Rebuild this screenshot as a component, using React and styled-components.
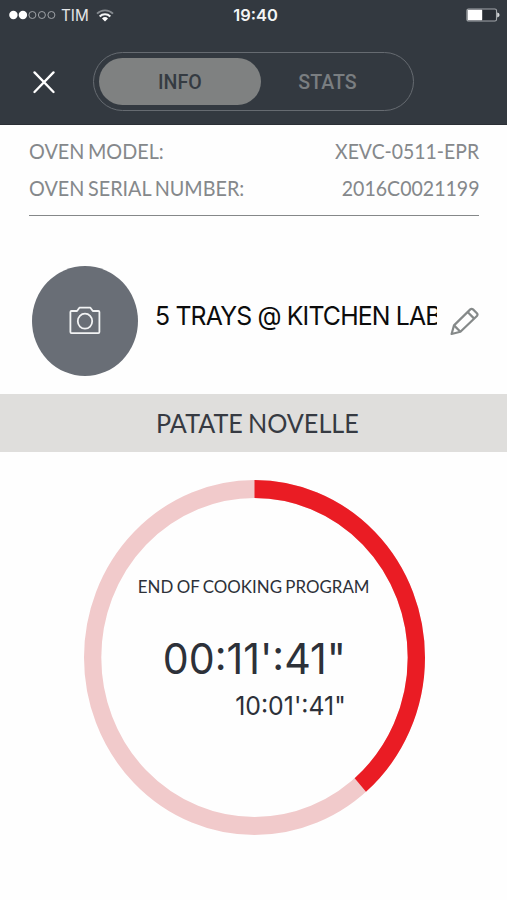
import React from 'react';
import styled, { createGlobalStyle } from 'styled-components';

const GlobalStyle = createGlobalStyle`
  * { box-sizing: border-box; }
  body { margin: 0; background-color: #fefefe; }
`

const Screen = styled.div`
  width: 507px;
  height: 900px;
  overflow: hidden;
  background-color: #fefefe;
  font-family: Lato, sans-serif;
`

// every label uses slightly condensed letters
const Label = styled.span`
  display: inline-block;
  white-space: nowrap;
  transform: scaleX(${props => props.$condense || 0.955});
  transform-origin: ${props => props.$from || 'left'} center;
`

const Header = styled.header`
  height: 125px;
  background-color: #333940;
  border-bottom: 1px solid #2b2f35;
`

const StatusBar = styled.div`
  display: grid;
  grid-template-columns: 1fr auto 1fr;
  align-items: center;
  height: 30px;
  padding: 0 7px 0 9px;
  font-family: Inter, sans-serif;
  font-size: 16px;
  line-height: 30px;
  color: #e4e6e8;
`

const Carrier = styled.div`
  display: flex;
  align-items: center;
`

const CarrierName = styled(Label)`
  width: 35px;
  margin-left: 5px;
`

const Clock = styled(Label)`
  font-weight: 600;
  color: #f4f5f6;
  margin-left: 2px;
`

const Battery = styled.svg`
  justify-self: end;
`

const Nav = styled.nav`
  display: flex;
  align-items: center;
  gap: 38px;
  padding: 22px 0 0 33px;
`

const Switch = styled.div`
  display: flex;
  width: 321px;
  height: 59px;
  padding: 5px;
  border: 1px solid #666b71;
  border-radius: 30px;
`

const Tab = styled.button`
  width: ${props => props.$active ? 162 : 133}px;
  height: 47px;
  padding: 0;
  border: none;
  border-radius: 24px;
  background-color: ${props => props.$active ? '#7f8181' : 'transparent'};
  color: ${props => props.$active ? '#353b42' : '#7a7e81'};
  font-family: Roboto, sans-serif;
  font-size: 20.5px;
  font-weight: 500;
  line-height: 48px;
`

const Info = styled.section`
  margin: 0 28px 0 29px;
  padding: 8px 0;
  border-bottom: 1px solid #858889;
`

const InfoRow = styled.div`
  display: flex;
  justify-content: space-between;
  height: 37px;
  font-size: 20.5px;
  line-height: 37px;
  word-spacing: -1.5px;
  color: #85888b;
`

const Device = styled.section`
  display: flex;
  align-items: center;
  height: 178px;
  padding: 32px 28px 0 32px;
`

const Photo = styled.div`
  display: flex;
  align-items: center;
  justify-content: center;
  width: 106px;
  height: 110px;
  border-radius: 50%;
  background-color: #696e76;
`

const DeviceName = styled.div`
  width: 282px;
  height: 36px;
  margin: 0 13px 10px 17px;
  overflow: hidden;
  font-family: Inter, sans-serif;
  font-size: 26px;
  line-height: 36px;
  letter-spacing: -0.88px;
  color: #0c0c0c;
`

const Program = styled.h2`
  height: 58px;
  margin: 0;
  padding-left: 155.5px;
  background-color: #dfdedc;
  font-size: 26.5px;
  font-weight: 400;
  line-height: 58px;
  word-spacing: -1.5px;
  color: #363a42;
`

const Dial = styled.section`
  display: grid;
  justify-content: center;
  padding: 27.5px 0 0 1px;
`

const Ring = styled.svg`
  grid-area: 1 / 1;
`

const Times = styled.div`
  grid-area: 1 / 1;
  display: flex;
  flex-direction: column;
  align-items: center;
  padding-top: 93.5px;
  color: #2d3139;
`

const Caption = styled(Label)`
  font-size: 17.6px;
  line-height: 28px;
  word-spacing: -1px;
`

const Remaining = styled(Label)`
  align-self: flex-end;
  margin: 31px 79px 0 0;
  font-family: Inter, sans-serif;
  font-size: 42px;
  line-height: 54px;
`

const Total = styled(Label)`
  align-self: flex-end;
  margin: 4px 79px 0 0;
  font-family: Inter, sans-serif;
  font-size: 26px;
  line-height: 32px;
`

const info = [
  { label: 'OVEN MODEL:', value: 'XEVC-0511-EPR', condense: 0.947 },
  { label: 'OVEN SERIAL NUMBER:', value: '2016C0021199', condense: 0.953 },
]

const SIGNAL = 2
const PROGRESS = 0.3864

const SignalDots = () => (
  <svg width="47" height="10" viewBox="0 0 47 10">
    {[0, 1, 2, 3, 4].map((i) => (
      <circle
        key={i}
        cx={4.4 + i * 9.5}
        cy="5"
        r={i < SIGNAL ? 4.2 : 3.5}
        fill={i < SIGNAL ? '#fff' : 'none'}
        stroke={i < SIGNAL ? 'none' : '#a9adb1'}
        strokeWidth="0.9"
      />
    ))}
  </svg>
)

const WifiIcon = () => (
  <svg width="18" height="13" viewBox="0 0 18 13" fill="none">
    <path d="M1 4.6 A11.5 11.5 0 0 1 17 4.6" stroke="#858a8f" strokeWidth="1.9" />
    <path d="M3.7 7.4 A7.6 7.6 0 0 1 14.3 7.4" stroke="#f4f5f6" strokeWidth="2.1" />
    <path d="M6 9.5 A4.4 4.4 0 0 1 12 9.5 L9 12.4 Z" fill="#fff" />
  </svg>
)

const BatteryIcon = () => (
  <Battery width="34" height="14" viewBox="0 0 34 14">
    <rect x="0.9" y="1" width="29.6" height="12" rx="1.6" fill="#282d34" stroke="#a4a8ac" strokeWidth="1.1" />
    <rect x="1.6" y="1.8" width="14.6" height="10.4" rx="0.6" fill="#fff" />
    <path d="M31.2 4.6 Q33.6 5 33.6 7 Q33.6 9 31.2 9.4 Z" fill="#d5d7d9" />
  </Battery>
)

const CloseIcon = () => (
  <svg width="22" height="24" viewBox="0 0 22 24" stroke="#fff" strokeWidth="2.3" strokeLinecap="round">
    <path d="M1.5 2.4 L20.5 22 M20.5 2.4 L1.5 22" />
  </svg>
)

const CameraIcon = () => (
  <svg width="32" height="30" viewBox="0 0 32 30" fill="none" stroke="#f2f3f4" strokeWidth="1.8" strokeLinejoin="round">
    <path d="M2.5 5 H8 L10.4 1.7 H21.4 L23.8 5 H29.3 Q30.4 5 30.4 6.1 V26 Q30.4 27.1 29.3 27.1 H2.5 Q1.4 27.1 1.4 26 V6.1 Q1.4 5 2.5 5 Z" />
    <ellipse cx="16" cy="15.2" rx="7.2" ry="7.5" />
  </svg>
)

const PencilIcon = () => (
  <svg width="29" height="29" viewBox="0 0 29 29" fill="none" stroke="#858989" strokeWidth="2.2" strokeLinejoin="round">
    <path d="M1.6 27 L4 18.4 L20.3 2.4 Q21.6 1.2 23 2.4 L26.9 6.2 Q28.1 7.6 26.9 9 L10.4 24.8 Z" />
    <path d="M4 18.4 L10.4 24.8 M17.6 5 L24.2 11.6" />
  </svg>
)

const ProgressRing = ({ value }) => {
  const r = 168.5
  const length = 2 * Math.PI * r
  return (
    <Ring width="341" height="355" viewBox="0 0 355 355" preserveAspectRatio="none" fill="none" strokeWidth="18">
      <circle cx="177.5" cy="177.5" r={r} stroke="#f1cacb" />
      <circle
        cx="177.5"
        cy="177.5"
        r={r}
        stroke="#ea1c24"
        strokeDasharray={`${length * value} ${length}`}
        transform="rotate(-90 177.5 177.5)"
      />
    </Ring>
  )
}

export default function App() {
  return (
    <Screen>
      <GlobalStyle />
      <Header>
        <StatusBar>
          <Carrier>
            <SignalDots />
            <CarrierName>TIM</CarrierName>
            <WifiIcon />
          </Carrier>
          <Clock $condense={1.03} $from="center">19:40</Clock>
          <BatteryIcon />
        </StatusBar>
        <Nav>
          <CloseIcon />
          <Switch>
            <Tab $active><Label $from="center">INFO</Label></Tab>
            <Tab><Label $from="center">STATS</Label></Tab>
          </Switch>
        </Nav>
      </Header>
      <Info>
        {info.map((row) => (
          <InfoRow key={row.label}>
            <Label $condense={0.965}>{row.label}</Label>
            <Label $from="right" $condense={row.condense}>{row.value}</Label>
          </InfoRow>
        ))}
      </Info>
      <Device>
        <Photo><CameraIcon /></Photo>
        <DeviceName><Label>5 TRAYS @ KITCHEN LAB</Label></DeviceName>
        <PencilIcon />
      </Device>
      <Program><Label $condense={0.95}>PATATE NOVELLE</Label></Program>
      <Dial>
        <ProgressRing value={PROGRESS} />
        <Times>
          <Caption $from="center" $condense={0.96}>END OF COOKING PROGRAM</Caption>
          <Remaining $from="right" $condense={0.98}>00:11':41"</Remaining>
          <Total $from="right">10:01':41"</Total>
        </Times>
      </Dial>
    </Screen>
  )
}
